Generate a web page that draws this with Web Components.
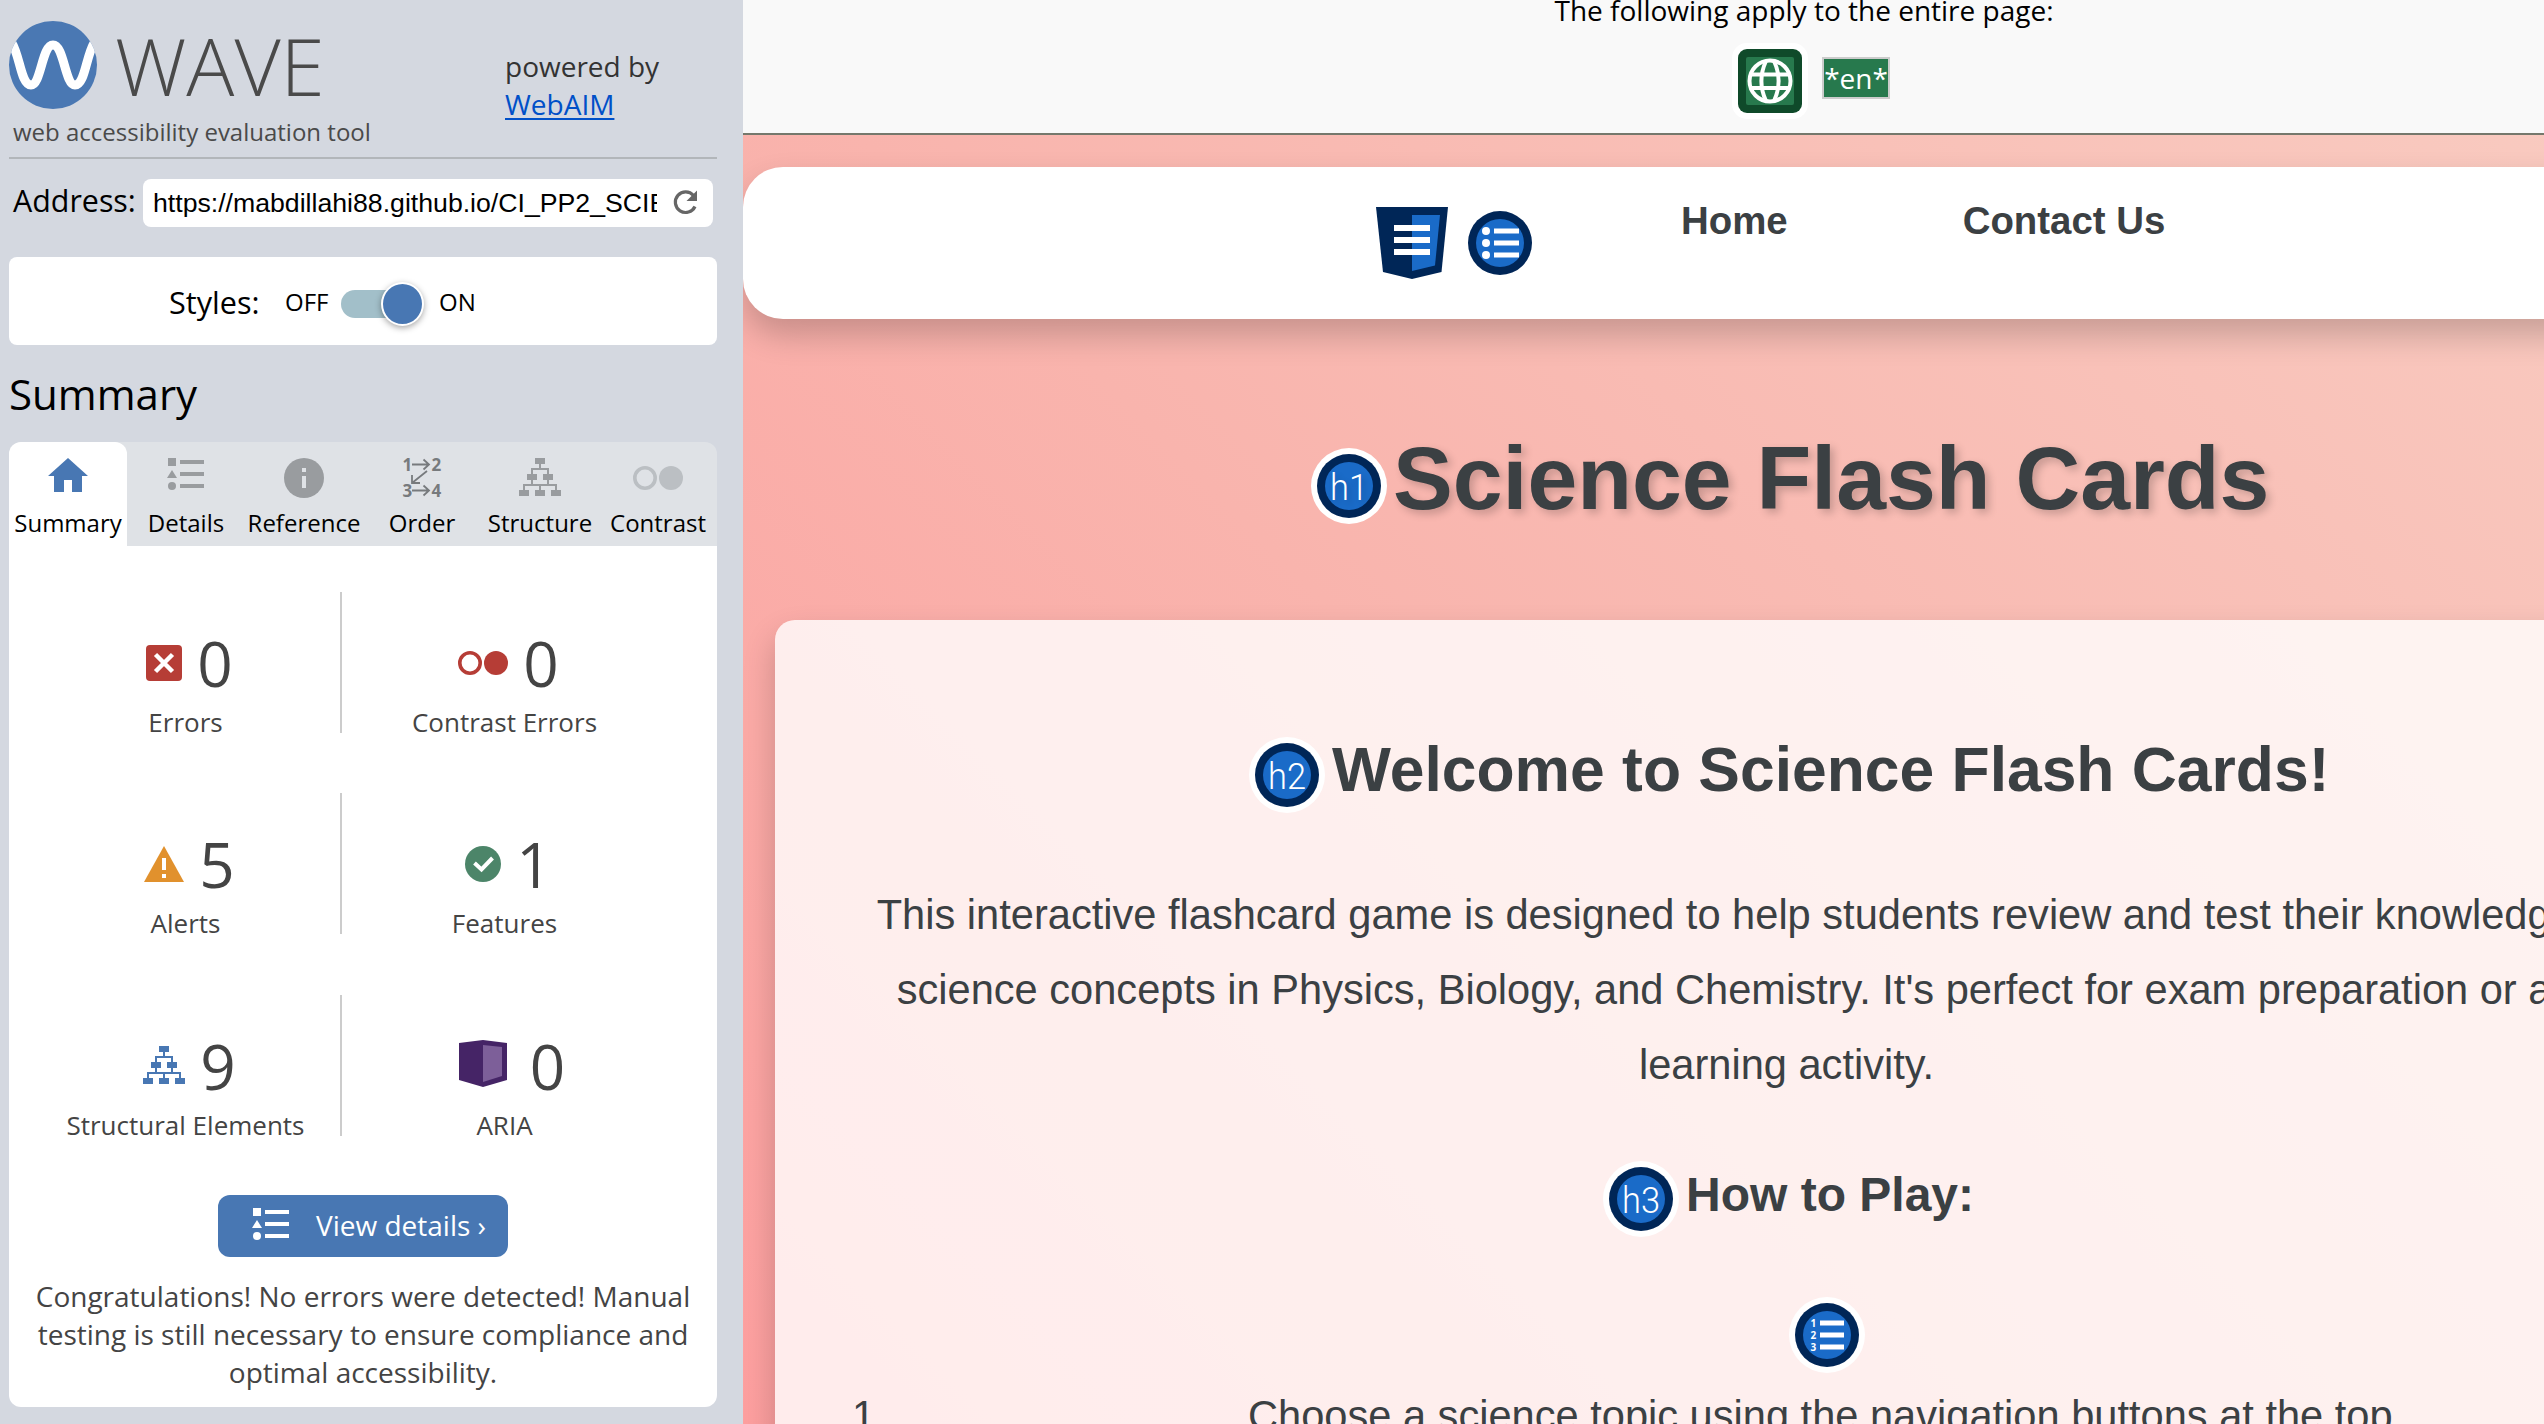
<!DOCTYPE html>
<html lang="en"><head><meta charset="utf-8"><title>WAVE</title>
<style>
body{margin:0;width:2544px;height:1424px;overflow:hidden;font-family:"Open Sans",sans-serif}
</style></head><body>
<wave-app></wave-app>
<script>
const ICONS={
home:'<svg width="40" height="40" viewBox="0 0 40 40"><path fill="#4877b3" d="M20 0 40 18H34V34H24V22H16V34H6V18H0Z"/></svg>',
list:'<svg width="38" height="40" viewBox="0 0 38 40" fill="currentColor"><path d="M1 0h8v8H1zM5 12l5 8H0zM13 2h24v4H13zM13 14h24v4H13zM13 26h24v4H13z"/><circle cx="5" cy="28" r="4"/></svg>',
info:'<svg width="40" height="40" viewBox="0 0 40 40"><circle cx="20" cy="20" r="20" fill="#999c9f"/><path fill="#dfe2e6" d="M18 10h4v4h-4zM18 18h4v12h-4z"/></svg>',
order:'<svg width="38" height="40" viewBox="0 0 38 40" fill="#777a7d" stroke="none" font-family="Open Sans" font-size="17" font-weight="700" overflow="visible"><text x="-0.500" y="12.500">1</text><text x="28.500" y="12.500">2</text><text x="-0.500" y="38.500">3</text><text x="28.500" y="38.500">4</text><path fill="none" stroke="#777a7d" stroke-width="1.800" d="M9 6.500H25.500M20.500 1.500l5.500 5-5.500 5M9 32.500H25.500M20.500 27.500l5.500 5-5.500 5M24 13 9 25M9 17v8h8"/></svg>',
tree:'<svg width="42" height="40" viewBox="0 0 42 40" fill="currentColor"><path d="M16 0h10v6H16zM8 16h10v6H8zM24 16h10v6H24zM0 32h10v6H0zM16 32h10v6H16zM32 32h10v6H32z"/><path d="M21 6v5M13 17v-6h16v6M13 22v5M29 22v5M5 33v-6h32v6M21 27v6" fill="none" stroke="currentColor" stroke-width="2"/></svg>',
contrast:'<svg width="50" height="24" viewBox="0 0 50 24"><circle cx="12" cy="12" r="10.200" fill="none" stroke="currentColor" stroke-width="3.600"/><circle cx="38" cy="12" r="12" fill="currentColor"/></svg>',
error:'<svg width="36" height="36" viewBox="0 0 36 36"><rect width="36" height="36" rx="4" fill="#b63d36"/><path d="M9.500 9.500 26.500 26.500M26.500 9.500 9.500 26.500" stroke="#fff" stroke-width="4.500"/></svg>',
alert:'<svg width="40" height="36" viewBox="0 0 40 36"><path d="M20 0 40 36H0Z" fill="#e1912d"/><path d="M18 12h4v12h-4zM18 28h4v4h-4z" fill="#fff"/></svg>',
feature:'<svg width="36" height="36" viewBox="0 0 36 36"><circle cx="18" cy="18" r="18" fill="#4c8569"/><path d="M9.500 17l7 6.500L27.500 12" fill="none" stroke="#fff" stroke-width="4"/></svg>',
aria:'<svg width="48" height="48" viewBox="0 0 48 48"><path d="M0 3 24 0 48 3V40L24 47 0 40Z" fill="#452466"/><path d="M24 5 43 7V36L24 42Z" fill="#7d5f99"/></svg>',
reload:'<svg width="26" height="26" viewBox="0 0 26 26"><path d="M21.500 5.500A10.300 10.300 0 1 0 23 16.500" fill="none" stroke="#666" stroke-width="3.200"/><path d="M25 0.500V11H14.500Z" fill="#666"/></svg>',
logo:'<svg width="88" height="88" viewBox="0 0 88 88"><circle cx="44" cy="44" r="44" fill="#4a78b3"/><clipPath id="c"><circle cx="44" cy="44" r="44"/></clipPath><path clip-path="url(#c)" d="M3 22C11 35 12 64 22 64S33 24 44 24 56 64 66 64 77 35 85 22" fill="none" stroke="#fff" stroke-width="9"/></svg>',
globe:'<svg width="76" height="76" viewBox="0 0 76 76"><rect width="76" height="76" rx="15" fill="#fff"/><rect x="6" y="6" width="64" height="64" rx="9" fill="#0f4a2a"/><rect x="14" y="14" width="48" height="48" rx="2" fill="#27794d"/><g fill="none" stroke="#fff" stroke-width="4"><circle cx="38" cy="38" r="20.500"/><path d="M18 31.500H58M18 45H58"/><path d="M34 18C28 31 28 45 34 58M42 18C48 31 48 45 42 58"/></g></svg>',
nav:'<svg width="72" height="72" viewBox="0 0 72 72"><path d="M0 0H72L65.500 65 36 72 7 65Z" fill="#002657"/><path d="M36 8H64L59 58.500 36 64Z" fill="#1a6bc8"/><path d="M18 18H54V24H18zM18 30H54V36H18zM18 42H54V48H18z" fill="#fff"/></svg>'};
const badge=(inner)=>'<svg width="76" height="76" viewBox="0 0 76 76"><circle cx="38" cy="38" r="38" fill="#fff"/><circle cx="38" cy="38" r="32" fill="#002657"/><circle cx="38" cy="38" r="24" fill="#1a6bc8"/>'+inner+'</svg>';
for(const n of [1,2,3])ICONS['h'+n]=badge('<text x="38" y="52" text-anchor="middle" font-family="Roboto" font-weight="350" font-size="36.500" textLength="38" lengthAdjust="spacingAndGlyphs" fill="#fff">h'+n+'</text>');
ICONS.ul=badge('<g fill="#fff"><circle cx="24" cy="26" r="4"/><circle cx="24" cy="38" r="4"/><circle cx="24" cy="50" r="4"/><path d="M32 23.500h25v5H32zM32 35.500h25v5H32zM32 47.500h25v5H32z"/></g>');
ICONS.ol=badge('<g fill="#fff"><path d="M31 23.500h24v5H31zM31 35.500h24v5H31zM31 47.500h24v5H31z"/><g font-family="Open Sans" font-weight="700" font-size="10"><text x="21.500" y="29.500">1</text><text x="21.500" y="42">2</text><text x="21.500" y="54">3</text></g></g>');
const make=(name,html)=>customElements.define(name,class extends HTMLElement{constructor(){super();this.attachShadow({mode:'open'});}
connectedCallback(){this.shadowRoot.innerHTML=typeof html==='function'?html(this):html;}});

make('wave-icon',e=>'<style>:host{display:inline-flex;line-height:0;flex:none}svg{display:block}</style>'+ICONS[e.getAttribute('name')]);

make('wave-header',`<style>:host{display:block;height:157px;border-bottom:2px solid #b2b6ba}
.row{display:flex}.brand{width:496px;padding-top:21px}.logo{display:flex;height:88px}
.name{font-weight:300;font-size:80px;line-height:88px;margin:0 0 0 18px;color:#4a4a4a;white-space:nowrap}
.tag{font-size:24px;line-height:32px;margin:7px 0 0 4px;color:#4a4a4a;white-space:nowrap}
.by{padding-top:47px;font-size:28px;line-height:38px;color:#333}a{color:#0050c8;text-decoration:underline;text-decoration-thickness:2px;text-underline-offset:3px}</style>
<div class="row"><div class="brand"><div class="logo"><wave-icon name="logo"></wave-icon><span class="name">WAVE</span></div><div class="tag">web accessibility evaluation tool</div></div><div class="by">powered by<br><a>WebAIM</a></div></div>`);

make('wave-address',`<style>:host{display:flex;align-items:center;height:48px;margin-top:20px;padding-left:4px;font-size:30.400px}
label{width:130px;white-space:nowrap;line-height:44px;margin-top:-4px}.box{width:570px;height:48px;border-radius:8px;background:#fff;display:flex;align-items:center;box-sizing:border-box;padding-left:10px;font:26.67px "Liberation Sans",sans-serif}
.url{width:504px;overflow:hidden;white-space:nowrap;margin-right:15px}</style><label>Address:</label><div class="box"><span class="url">https://mabdillahi88.github.io/CI_PP2_SCIENCE</span><wave-icon name="reload"></wave-icon></div>`);

make('wave-styles',`<style>:host{display:flex;align-items:center;height:88px;margin-top:30px;border-radius:8px;background:#fff;box-sizing:border-box;padding-left:160px;font-size:30.600px}
.l{width:116px;padding-top:2px}.o{font-size:24px;width:56px;padding-top:1px}.t{width:83px;height:28px;border-radius:14px;background:linear-gradient(#a2bfc9,#a2bfc9) 0 0/62px 28px no-repeat;display:flex;align-items:center;margin-top:6px}
.k{width:40px;height:40px;border:2px solid #fff;border-radius:50%;background:#4877b3;margin-left:40px;box-shadow:0 2px 6px rgba(0,0,0,.35)}.n{font-size:24px;margin-left:15px;padding-top:1px}</style>
<span class="l">Styles:</span><span class="o">OFF</span><span class="t"><span class="k"></span></span><span class="n">ON</span>`);

make('wave-tab',e=>`<style>:host{flex:1;display:flex;flex-direction:column;align-items:center;height:104px;width:118px;color:#999c9f}
:host([active]){background:#fff;border-radius:12px 12px 0 0}:host([name=contrast]){color:#bbbfc3}
.i{height:40px;margin-top:${e.getAttribute('name')=='contrast'?24:16}px;margin-bottom:${e.getAttribute('name')=='contrast'?-8:0}px}.t{font-size:24px;line-height:32px;margin-top:9px;color:#000;white-space:nowrap}</style>
<div class="i"><wave-icon name="${e.getAttribute('name')}"></wave-icon></div><div class="t"><slot></slot></div>`);

make('wave-stat',e=>`<style>:host{display:block;height:141px;text-align:center;color:#444}
.v{display:flex;justify-content:center;align-items:center;gap:15px;padding:52px 0 0 9px;box-sizing:border-box;height:89px}.n{font-weight:400;font-size:62px;line-height:60px}
.t{font-size:26px;line-height:36px;margin:23px 0 0 1px;white-space:nowrap}:host([name=tree]) wave-icon{color:#4877b3}:host([name=contrast]) wave-icon{color:#b63d36}:host([name=aria]) .v{gap:23px;padding-left:16px}:host([name=aria]) wave-icon{margin-top:-3px}</style>
<div class="v"><wave-icon name="${e.getAttribute('name')}"></wave-icon><span class="n">${e.getAttribute('value')}</span></div><div class="t"><slot></slot></div>`);

make('wave-panel',`<style>:host{display:block}.tabs{display:flex;background:#dfe2e6;border-radius:12px 12px 0 0}
.p{background:#fff;border-radius:0 0 12px 12px;height:861px;box-sizing:border-box;padding-top:46px}
.r{display:grid;grid-template-columns:331px 2px 324px;margin-bottom:60px}.r:nth-child(2){margin-bottom:61px}.r:nth-child(3){margin-bottom:59px}.d{background:#ccc;height:141px}
.r wave-stat:first-child{margin-left:21px}
.b{width:290px;height:62px;border-radius:12px;background:#4877b3;color:#fff;display:flex;align-items:center;margin-left:209px;box-sizing:border-box;padding:0 0 3px 34px;font-size:28px}.b wave-icon{margin-right:26px;padding-top:7px}
.m{font-size:28px;line-height:38px;text-align:center;color:#444;margin-top:20px}</style>
<div class="tabs"><wave-tab active name="home">Summary</wave-tab><wave-tab name="list">Details</wave-tab><wave-tab name="info">Reference</wave-tab><wave-tab name="order">Order</wave-tab><wave-tab name="tree">Structure</wave-tab><wave-tab name="contrast">Contrast</wave-tab></div>
<div class="p"><div class="r"><wave-stat name="error" value="0">Errors</wave-stat><div class="d"></div><wave-stat name="contrast" value="0">Contrast Errors</wave-stat></div>
<div class="r"><wave-stat name="alert" value="5">Alerts</wave-stat><div class="d"></div><wave-stat name="feature" value="1">Features</wave-stat></div>
<div class="r"><wave-stat name="tree" value="9">Structural Elements</wave-stat><div class="d"></div><wave-stat name="aria" value="0">ARIA</wave-stat></div>
<div class="b"><wave-icon name="list"></wave-icon>View details ›</div>
<div class="m">Congratulations! No errors were detected! Manual<br>testing is still necessary to ensure compliance and<br>optimal accessibility.</div></div>`);

make('wave-sidebar',`<style>:host{display:block;width:743px;height:1424px;background:#d4d8e0;flex:none;box-sizing:border-box;padding:0 26px 0 9px;overflow:hidden}
h2{font-size:42px;font-weight:400;line-height:56px;margin:21px 0 20px;}</style>
<wave-header></wave-header><wave-address></wave-address><wave-styles></wave-styles><h2>Summary</h2><wave-panel></wave-panel>`);

make('page-notice',`<style>:host{display:block;height:133px;width:2122px;background:#f9f9f9;border-bottom:2px solid #75786c;text-align:center}
.t{font-size:28px;height:43px;display:flex;justify-content:center;align-items:flex-start;line-height:21px}
.r{display:flex;justify-content:center;gap:14px;align-items:flex-start;padding-left:14px}.e{margin-top:14px;height:38px;border:2px solid #ccc;background:#27794d;color:#fff;font-size:28px;line-height:38px;width:64px}</style>
<div class="t">The following apply to the entire page:</div><div class="r"><wave-icon name="globe"></wave-icon><span class="e">*en*</span></div>`);

make('page-nav',`<style>:host{display:flex;height:152px;width:2087px;margin-top:32px;background:#fff;border-radius:40px;box-shadow:0 16px 32px rgba(0,0,0,.2);box-sizing:border-box;padding-left:633px;font-weight:700;font-size:38.400px;line-height:44px}
.a{margin-top:40px}.b{margin:38px 0 0 14px}.h{margin:32px 0 0 143px}.c{margin:32px 0 0 175px}</style>
<wave-icon class="a" name="nav"></wave-icon><wave-icon class="b" name="ul"></wave-icon><span class="h">Home</span><span class="c">Contact Us</span>`);

make('page-card',`<style>:host{display:block;width:2023px;margin:0 0 0 32px;height:2400px;border-radius:20px;background:rgba(255,255,255,.8);box-shadow:0 16px 32px rgba(0,0,0,.2);text-align:center;white-space:nowrap}
h2,h3{margin:0;display:flex;color:#3b4043}
h2{font-size:62.400px;padding:117px 0 0 474px;line-height:65px;gap:7px;height:76px}
p{margin:64px 0 0;font-size:41.600px;line-height:75px}
h3{font-size:48px;padding:59px 0 0 828px;line-height:67px;gap:7px}
.ol{padding:60px 0 0 1014px;text-align:left}.li{display:flex;font-size:41.600px;line-height:75px;padding-left:77px;margin-top:1px}.li span{width:396px;text-align:left}</style>
<h2><wave-icon name="h2"></wave-icon><span>Welcome to Science Flash Cards!</span></h2>
<p>This interactive flashcard game is designed to help students review and test their knowledge of key<br>science concepts in Physics, Biology, and Chemistry. It's perfect for exam preparation or as a fun<br>learning activity.</p>
<h3><wave-icon name="h3"></wave-icon><span>How to Play:</span></h3>
<div class="ol"><wave-icon name="ol"></wave-icon></div><div class="li"><span>1.</span>Choose a science topic using the navigation buttons at the top.</div>`);

make('page-view',`<style>:host{display:block;flex:1;height:1424px;overflow:hidden;font-family:"Liberation Sans",Arial,sans-serif;color:#3b4043;background:linear-gradient(45deg,#fd9f9f 0%,#fbaaa6 20%,#f9b4ad 40%,#f9cfc4 100%) 0 0/2087px 1424px}
page-notice{font-family:"Open Sans",sans-serif;color:#000}
h1{margin:129px 0 96px 568px;display:flex;height:76px;line-height:60px;font-size:89.600px;gap:6px;white-space:nowrap;text-shadow:4px 4px 8px rgba(0,0,0,.2)}</style>
<page-notice></page-notice><page-nav></page-nav><h1><wave-icon name="h1"></wave-icon><span>Science Flash Cards</span></h1><page-card></page-card>`);

make('wave-app',`<style>:host{display:flex;width:2544px;height:1424px;overflow:hidden}</style><wave-sidebar></wave-sidebar><page-view></page-view>`);
</script></body></html>
